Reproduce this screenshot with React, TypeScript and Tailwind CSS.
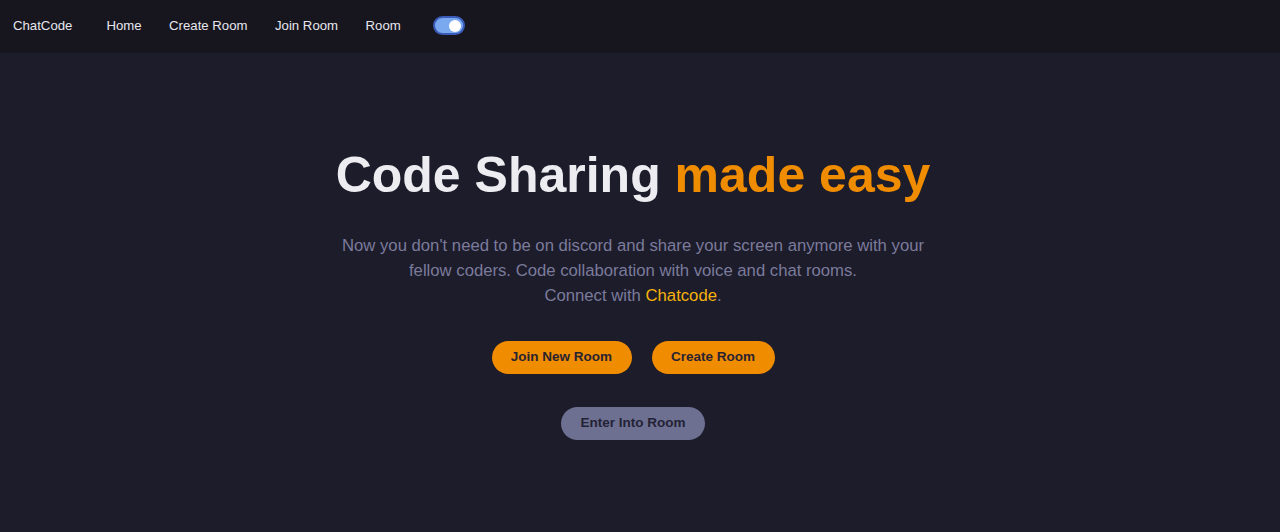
import { useState } from 'react';

const links = ['Home', 'Create Room', 'Join Room', 'Room'];

const App = () => {
  const [dark, setDark] = useState(true);

  return (
    <div className="min-h-[580px] bg-[#1d1c2b] font-['Liberation_Sans',Arial,sans-serif]">
      {/* Navbar */}
      <nav className="h-[53px] bg-[#17161f] flex items-center pl-[13px] pb-[2px]">
        <span className="text-[13.2px] text-[#e6e6ee] mr-[34px]">ChatCode</span>
        <div className="flex items-center gap-[27.5px]">
          {links.map((l) => (
            <a key={l} className="text-[13.2px] text-[#e6e6ee] cursor-pointer">
              {l}
            </a>
          ))}
        </div>
        <button
          onClick={() => setDark(!dark)}
          className="ml-[32px] w-[32px] h-[19px] rounded-full bg-[#7aa9f0] border-2 border-[#3a5bb8] flex items-center justify-end px-[2px]"
        >
          <span className="w-[12px] h-[12px] rounded-full bg-white" />
        </button>
      </nav>

      <section className="flex flex-col items-center pt-[91px] pr-[14px]">
        <h1 className="text-[50px] font-bold leading-[62px] text-[#ececf1]">
          Code Sharing <span className="text-[#f08c00]">made easy</span>
        </h1>
        <p className="mt-[27px] w-[600px] text-center text-[16.7px] leading-[25px] text-[#7b7b9b]">
          Now you don't need to be on discord and share your screen anymore with your fellow coders. Code
          collaboration with voice and chat rooms.
          <br />
          Connect with <span className="text-[#f5b20c]">Chatcode</span>.
        </p>
        <div className="mt-[33px] flex gap-[20px]">
          <button className="h-[33px] w-[140px] rounded-full bg-[#f08c00] text-[13.5px] font-bold text-[#2a2331]">
            Join New Room
          </button>
          <button className="h-[33px] w-[123px] rounded-full bg-[#f08c00] text-[13.5px] font-bold text-[#2a2331]">
            Create Room
          </button>
        </div>
        <button className="mt-[33px] h-[33px] w-[144px] rounded-full bg-[#6e7091] text-[13.5px] font-bold text-[#232236]">
          Enter Into Room
        </button>
      </section>
    </div>
  );
};

export default App;
